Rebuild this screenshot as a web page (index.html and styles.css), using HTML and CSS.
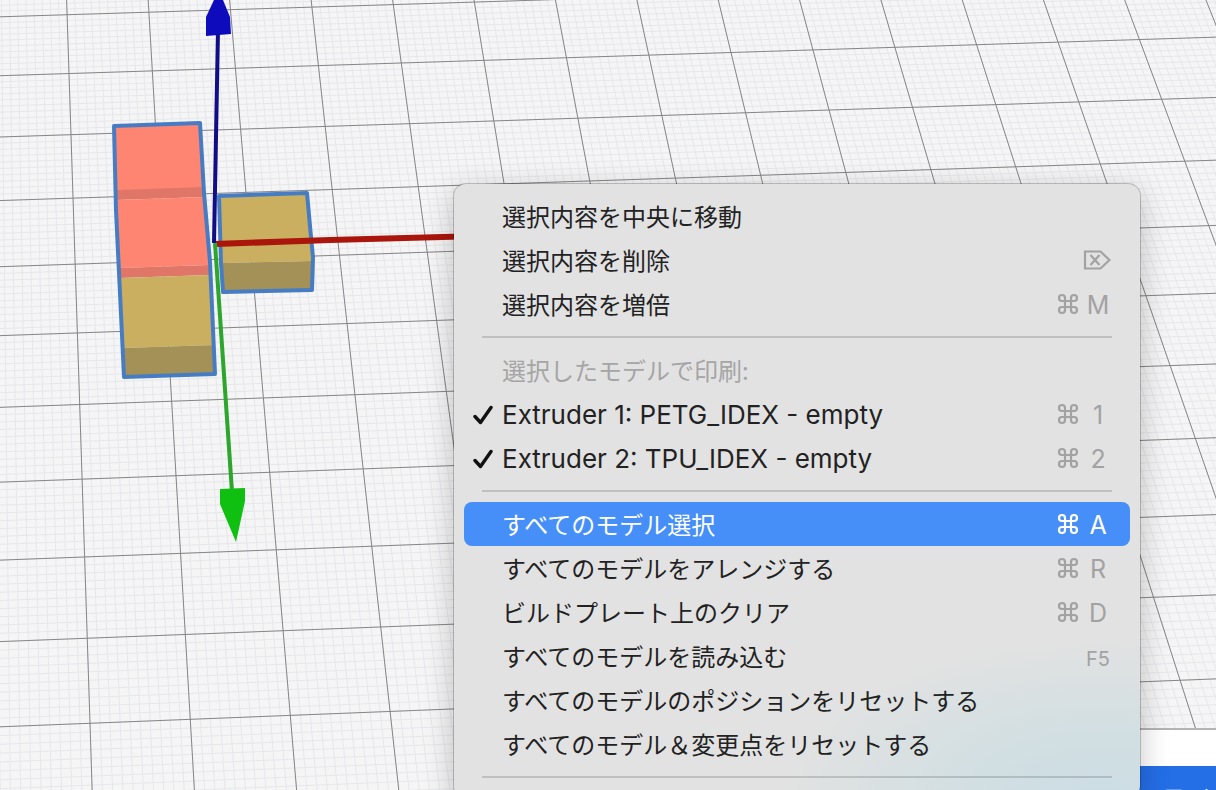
FILE: index.html
```html
<!DOCTYPE html>
<html lang="ja">
<head>
<meta charset="utf-8">
<title>モデルビュー</title>
<link rel="stylesheet" href="styles.css">
</head>
<body>
<main class="viewport">
  <svg class="scene" aria-hidden="true">
    <path id="grid-minor" class="grid-minor"/>
    <path id="grid-major" class="grid-major"/>

    <g class="model">
      <polygon fill="#ff8573" points="114,126 201,123 204,190 117,194"/>
      <polygon fill="#e07667" points="117,190 204,187 205,197 117,200"/>
      <polygon fill="#ff8573" points="117,200 205,197 209,265 120,268"/>
      <polygon fill="#e07667" points="120,268 209,265 210,275 120,278"/>
      <polygon fill="#c9af5f" points="120,278 210,275 215,345 123,348"/>
      <polygon fill="#a39158" points="123,348 215,345 216,374 124,377"/>
      <polygon class="outline" points="114,126 200,123 204,193 210,262 215,374 124,377 116,210"/>
    </g>
    <g class="model">
      <polygon fill="#c9af5f" points="219,196 307,193 313,261 221,263"/>
      <polygon fill="#a39158" points="221,263 313,261 312,290 224,292"/>
      <polygon class="outline" points="219,196 307,193 311,237 313,257 312,290 223,292 221,263"/>
    </g>

    <polygon fill="#aa150c" points="214,241 330,237 480,233 480,239 330,243 216,247"/>
    <line x1="214" y1="243" x2="218" y2="30" stroke="#100d87" stroke-width="4"/>
    <polygon fill="#0d0bbb" points="214,0 206,17 206,36 231,34 230,17 223,0"/>
    <line x1="215" y1="243" x2="232" y2="492" stroke="#2ca62c" stroke-width="4"/>
    <polygon fill="#10c010" points="220,489 245,488 245,501 236,542 220,504"/>
  </svg>

  <section class="slice-panel">
    <button class="slice-button" type="button">スライス</button>
  </section>

  <svg class="symbols" aria-hidden="true">
    <symbol id="command" viewBox="0 0 22 22">
      <path d="M8 8V5a3 3 0 1 0-3 3h12a3 3 0 1 0-3-3v12a3 3 0 1 0 3-3H5a3 3 0 1 0 3 3z" fill="none" stroke="currentColor" stroke-width="2.200"/>
    </symbol>
    <symbol id="forward-delete" viewBox="0 0 28 20">
      <path d="M2 1.500h15.500L26.500 10l-9 8.500H2zM7.500 5l9 10M16.500 5l-9 10" fill="none" stroke="currentColor" stroke-width="2.200"/>
    </symbol>
    <symbol id="check" viewBox="0 0 20 20">
      <path d="M2 11.500L7.500 17.500L18 2.500" fill="none" stroke="currentColor" stroke-width="3.400" stroke-linecap="round" stroke-linejoin="round"/>
    </symbol>
  </svg>

  <div class="menu" role="menu">
    <button class="item" role="menuitem" type="button"><span class="label">選択内容を中央に移動</span></button>
    <button class="item" role="menuitem" type="button"><span class="label">選択内容を削除</span><span class="shortcut"><svg class="delete-icon"><use href="#forward-delete"/></svg></span></button>
    <button class="item" role="menuitem" type="button"><span class="label">選択内容を増倍</span><span class="shortcut"><svg class="command-icon"><use href="#command"/></svg><kbd class="key">M</kbd></span></button>
    <hr class="separator">
    <div class="item heading"><span class="label">選択したモデルで印刷:</span></div>
    <button class="item" role="menuitemcheckbox" aria-checked="true" type="button"><svg class="check-icon"><use href="#check"/></svg><span class="label latin">Extruder 1: PETG_IDEX - empty</span><span class="shortcut"><svg class="command-icon"><use href="#command"/></svg><kbd class="key">1</kbd></span></button>
    <button class="item" role="menuitemcheckbox" aria-checked="true" type="button"><svg class="check-icon"><use href="#check"/></svg><span class="label latin">Extruder 2: TPU_IDEX - empty</span><span class="shortcut"><svg class="command-icon"><use href="#command"/></svg><kbd class="key">2</kbd></span></button>
    <hr class="separator">
    <button class="item selected" role="menuitem" type="button"><span class="label">すべてのモデル選択</span><span class="shortcut"><svg class="command-icon"><use href="#command"/></svg><kbd class="key">A</kbd></span></button>
    <button class="item" role="menuitem" type="button"><span class="label">すべてのモデルをアレンジする</span><span class="shortcut"><svg class="command-icon"><use href="#command"/></svg><kbd class="key">R</kbd></span></button>
    <button class="item" role="menuitem" type="button"><span class="label">ビルドプレート上のクリア</span><span class="shortcut"><svg class="command-icon"><use href="#command"/></svg><kbd class="key">D</kbd></span></button>
    <button class="item" role="menuitem" type="button"><span class="label">すべてのモデルを読み込む</span><span class="shortcut"><kbd class="key function">F5</kbd></span></button>
    <button class="item" role="menuitem" type="button"><span class="label">すべてのモデルのポジションをリセットする</span></button>
    <button class="item" role="menuitem" type="button"><span class="label">すべてのモデル＆変更点をリセットする</span></button>
    <hr class="separator">
  </div>
</main>
<script src="grid.js"></script>
</body>
</html>
```
FILE: styles.css
```css
* {
  box-sizing: border-box;
}

body {
  margin: 0;
  font-family: "Inter", "Noto Sans CJK JP", sans-serif;
}

.viewport {
  position: relative;
  height: 100vh;
  overflow: hidden;
  background: #f5f5f6;
}

.scene {
  display: block;
  width: 100%;
  height: 100%;
}

.grid-minor {
  fill: none;
  stroke: #e6e7eb;
  stroke-width: 1;
}

.grid-major {
  fill: none;
  stroke: #868689;
  stroke-width: 1;
}

.outline {
  fill: none;
  stroke: #467cc4;
  stroke-width: 4;
  stroke-linejoin: round;
}

.symbols {
  display: none;
}

.slice-panel {
  position: absolute;
  left: 960px;
  right: 0;
  top: 728px;
  padding-top: 36px;
  border-top: 2px solid #b4b4b6;
  background: #fff;
}

.slice-button {
  display: block;
  width: 100%;
  height: 66px;
  padding: 0 0 0 174px;
  border: 0;
  background: #246ee6;
  color: #fff;
  font: 700 26px/66px "Noto Sans CJK JP", sans-serif;
  text-align: left;
  white-space: nowrap;
}

.menu {
  position: absolute;
  left: 454px;
  top: 184px;
  width: 686px;
  padding: 10px;
  border-radius: 12px;
  background: radial-gradient(ellipse 320px 160px at 94% 100%, #cbdde4 0%, #d3dfe2 45%, #e2e2e2 100%) #e2e2e2;
  box-shadow: 0 0 0 1px rgba(0, 0, 0, 0.2), 0 8px 30px rgba(0, 0, 0, 0.24);
}

.item {
  display: flex;
  align-items: center;
  position: relative;
  width: 100%;
  height: 44px;
  padding: 0 19px 0 38px;
  border: 0;
  border-radius: 8px;
  background: none;
  color: #222;
  font-family: "Noto Sans CJK JP", sans-serif;
  font-size: 24px;
  line-height: 44px;
  text-align: left;
  white-space: nowrap;
}

.heading {
  color: #a5a5a5;
}

.selected {
  background: #468ff8;
  color: #fff;
}

.latin {
  padding-top: 2px;
  font-family: "Inter", sans-serif;
  font-size: 26px;
}

.check-icon {
  position: absolute;
  left: 9px;
  top: 13px;
  width: 20px;
  height: 20px;
  color: #111;
}

.shortcut {
  display: flex;
  align-items: center;
  gap: 6px;
  margin-left: auto;
  color: #a2a2a2;
}

.selected .shortcut {
  color: #fff;
}

.command-icon {
  width: 22px;
  height: 22px;
}

.delete-icon {
  width: 28px;
  height: 20px;
}

.key {
  width: 26px;
  padding-top: 2px;
  font-family: "Inter", sans-serif;
  font-size: 25px;
  text-align: center;
}

.function {
  padding-top: 6px;
  font-size: 20px;
}

.separator {
  height: 2px;
  margin: 10px 18px;
  border: 0;
  background: rgba(0, 0, 0, 0.15);
}
```
FILE: grid.js
```javascript
// Perspective projection of the build plate: cell coordinates to screen.
function project(i, j) {
  const w = 1 + 0.000964 * i - 0.018482 * j;
  return [
    (81.92 * i + 0.627 * j + 67.1) / w,
    (-2.531 * i + 57.49 * j + 14.7) / w
  ];
}

const bounds = { left: -3, right: 20, top: -3, bottom: 16 };

function segment(from, to) {
  const a = project(from[0], from[1]).map((n) => n.toFixed(1));
  const b = project(to[0], to[1]).map((n) => n.toFixed(1));
  return "M" + a.join(" ") + "L" + b.join(" ");
}

function gridPath(step) {
  let d = "";
  for (let n = bounds.left * step; n <= bounds.right * step; n++) {
    d += segment([n / step, bounds.top], [n / step, bounds.bottom]);
  }
  for (let n = bounds.top * step; n <= bounds.bottom * step; n++) {
    d += segment([bounds.left, n / step], [bounds.right, n / step]);
  }
  return d;
}

document.getElementById("grid-minor").setAttribute("d", gridPath(10));
document.getElementById("grid-major").setAttribute("d", gridPath(1));
```
